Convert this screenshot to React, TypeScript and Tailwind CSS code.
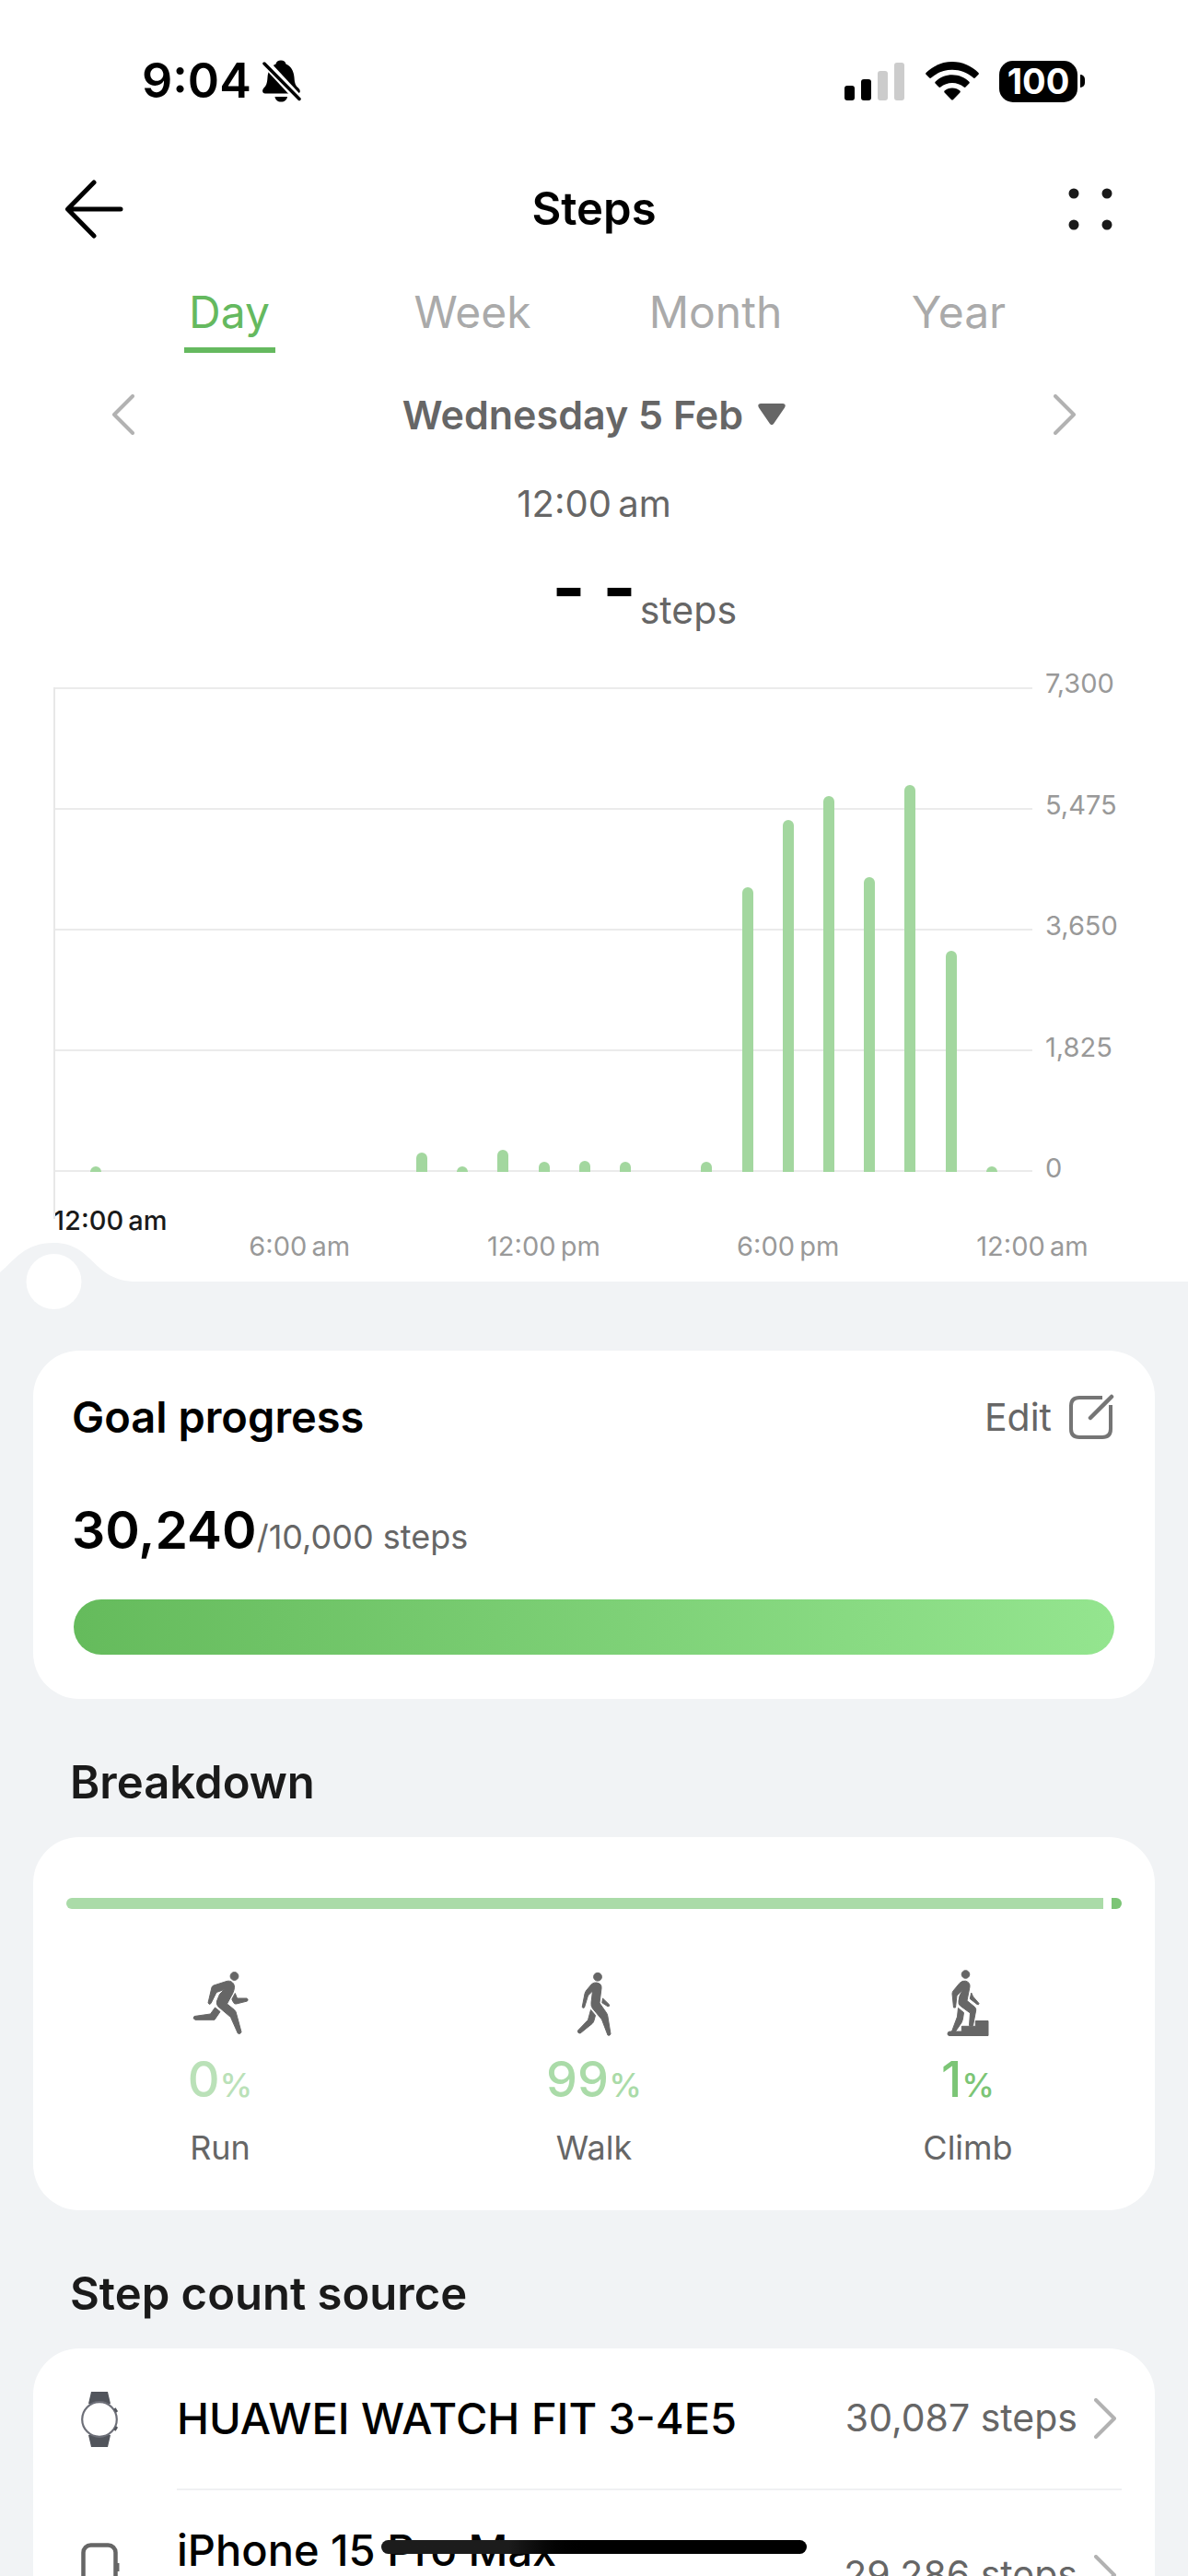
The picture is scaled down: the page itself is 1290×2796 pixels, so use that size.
import { useState } from "react";
import type { ReactNode } from "react";
import clsx from "clsx";

const TABS = ["Day", "Week", "Month", "Year"];
const MAX_STEPS = 7300;
const Y_TICKS = ["7,300", "5,475", "3,650", "1,825", "0"];
const X_TICKS = ["6:00\u2009am", "12:00\u2009pm", "6:00\u2009pm", "12:00\u2009am"];

const HOURLY = [
  { hour: 1, steps: 83 },
  { hour: 9, steps: 295 },
  { hour: 10, steps: 83 },
  { hour: 11, steps: 335 },
  { hour: 12, steps: 153 },
  { hour: 13, steps: 170 },
  { hour: 14, steps: 153 },
  { hour: 16, steps: 153 },
  { hour: 17, steps: 4290 },
  { hour: 18, steps: 5305 },
  { hour: 19, steps: 5665 },
  { hour: 20, steps: 4435 },
  { hour: 21, steps: 5825 },
  { hour: 22, steps: 3325 },
  { hour: 23, steps: 83 },
];

function BellOffIcon() {
  return (
    <svg width="42" height="46" viewBox="0 0 42 46" aria-hidden="true">
      <path
        d="M20 0.5C23 0.5 25 2 25.5 4.5C31 7 34 12 34.5 19C35 26 36 28 39 30.5C42 33.500 41 36.500 38 36.500H3C0 36.500-1 33.500 1.500 30.500C4 28 5 26 5.500 19C6 12 9 7 14.500 4.500C15 2 17 0.500 20 0.500Z"
        fill="#000"
      />
      <path d="M13.500 40H27C26.500 43.500 24 45.500 20.200 45.500S14 43.500 13.500 40Z" fill="#000" />
      <path d="M1 1L42 45" stroke="#fff" strokeWidth="9" />
      <path d="M2 4L40 42.500" stroke="#000" strokeWidth="3.500" strokeLinecap="round" />
    </svg>
  );
}

function SignalIcon() {
  return (
    <svg width="65" height="41" viewBox="0 0 65 41" aria-hidden="true">
      <rect x="0" y="25" width="11" height="16" rx="3" />
      <rect x="18" y="18" width="11" height="23" rx="3" />
      <rect x="36" y="9" width="11" height="32" rx="3" fill="#ccc" />
      <rect x="54" y="0" width="11" height="41" rx="3" fill="#ccc" />
    </svg>
  );
}

function WifiIcon() {
  return (
    <svg width="58" height="42" viewBox="0 0 58 42" aria-hidden="true">
      <path d="M29 0C40 0 50 4.500 57.500 12C58 12.500 58 13.300 57.500 13.800L53.800 17.600C53.300 18.100 52.500 18.100 52 17.600C45.500 11.700 37.500 8.800 29 8.800S12.500 11.700 6 17.600C5.500 18.100 4.700 18.100 4.200 17.600L0.500 13.800C0 13.300 0 12.500 0.500 12C8 4.500 18 0 29 0Z" />
      <path d="M29 14.300C36 14.300 42.500 17 47.400 21.800C47.900 22.300 47.900 23.100 47.400 23.600L43.500 27.500C43 28 42.200 28 41.700 27.500C38 24.500 33.700 23 29 23S20 24.500 16.300 27.500C15.800 28 15 28 14.500 27.500L10.600 23.600C10.100 23.100 10.100 22.300 10.600 21.800C15.500 17 22 14.300 29 14.300Z" />
      <path d="M29 28.500C32.200 28.500 35.100 29.700 37.400 31.600C37.900 32.100 37.900 32.900 37.400 33.400L29.900 41.200C29.400 41.700 28.600 41.700 28.100 41.200L20.600 33.400C20.100 32.900 20.100 32.100 20.600 31.600C22.900 29.700 25.800 28.500 29 28.500Z" />
    </svg>
  );
}

function BackIcon() {
  return (
    <svg width="64" height="64" viewBox="0 0 64 64" fill="none" stroke="#000" strokeWidth="5" strokeLinecap="round" strokeLinejoin="round" aria-hidden="true">
      <path d="M61 32H4M32 3L3.500 32L32 61" />
    </svg>
  );
}

function MoreIcon() {
  return (
    <svg width="48" height="46" viewBox="0 0 48 46" fill="#1a1a1a" aria-hidden="true">
      <circle cx="6" cy="6" r="5.500" />
      <circle cx="42" cy="6" r="5.500" />
      <circle cx="6" cy="40" r="5.500" />
      <circle cx="42" cy="40" r="5.500" />
    </svg>
  );
}

function Chevron({ flip = false }: { flip?: boolean }) {
  return (
    <svg width="24" height="44" viewBox="0 0 24 44" fill="none" stroke="#b2b2b2" strokeWidth="4" strokeLinecap="round" strokeLinejoin="round" aria-hidden="true">
      <path d={flip ? "M22 2L2 22L22 42" : "M2 2L22 22L2 42"} />
    </svg>
  );
}

function EditIcon() {
  return (
    <svg width="50" height="50" viewBox="0 0 50 50" fill="none" stroke="#757575" strokeWidth="4" strokeLinecap="round" aria-hidden="true">
      <path d="M37 4H12C6 4 3 7 3 13V38C3 44 6 47 12 47H37C43 47 46 44 46 38V12" strokeLinecap="butt" />
      <path d="M24 26L47 3" strokeWidth="4.500" />
    </svg>
  );
}

function RunIcon() {
  return (
    <svg width="72" height="72" viewBox="0 0 72 72" fill="#666" stroke="#666" strokeWidth="1" strokeLinejoin="round" aria-hidden="true">
      <circle cx="51.500" cy="7" r="4.400" />
      <path d="M23 36L27 19Q27.500 17.500 29 17L43 12.500C48 11 52 15 51.500 19.500Q51 23 49.500 26L43.500 37L51.500 43.500Q53.300 45 54 49L59 67.500Q58 70.500 55.300 69L47.500 51.500L34 40Q31.500 37.500 32.500 34L35.500 26.500L40.500 21.500L32 24.500L26 36.500Q24 38.500 23 36Z" />
      <path d="M52.300 25.500L54.500 31H65Q67 32.500 65.500 34L53.500 37Q51.500 37.500 50.500 35.500L48.800 32Z" />
      <path d="M30.500 41L36 45.500L30 54.300H9Q5.500 52.500 8 50.500L25.500 48Z" />
    </svg>
  );
}

function WalkIcon() {
  return (
    <svg width="72" height="72" viewBox="0 0 72 72" fill="#666" stroke="#666" strokeWidth="1" strokeLinejoin="round" aria-hidden="true">
      <circle cx="40" cy="7.700" r="4.400" />
      <path d="M23.200 40.500L26 26Q26.500 24 28 22L33.500 15.500Q36 13.500 39 14Q44.500 15 44 20L42 36L49 46Q50.500 48 50.800 50L54 69.500Q53.500 72 51 71L44.500 54L34.500 42Q32.500 39.500 33 35.500L34.500 23L29.500 28L25.500 41Q24 42 23.200 40.500Z" />
      <path d="M32.500 43.500L37.500 49.500L36 55Q35.500 57 34 58.500L21 69Q18 69 18.500 66L29.500 54.500Z" />
      <path d="M45.500 31L52.700 38Q53 40 51 39.800L44.800 35.800Z" />
    </svg>
  );
}

function ClimbIcon() {
  return (
    <svg width="72" height="72" viewBox="0 0 72 72" fill="#666" stroke="#666" strokeWidth="1" strokeLinejoin="round" aria-hidden="true">
      <circle cx="33.500" cy="5" r="4.300" />
      <path d="M20.500 41L19 26Q19 24.500 20 23L27 14.500Q30 11.500 33.500 12.200Q38.500 13.500 38 18.500L35 33.500L43.500 40.500Q45 42 44.700 44L41.500 60.500H37.500L38.500 47L27.500 39Q25.500 37.500 26 34Q26 28 30.500 22L24 28L22.500 41Z" />
      <path d="M25.500 41.500L31.500 46.500L30.500 53Q30 55.500 29 57.500L22.500 67H18.500L24.500 51Z" />
      <path d="M39.700 25L41.500 29L48 36.500Q48 38.500 46 37.500L38.300 31.500Z" />
      <path d="M44.300 55.500H58V71.500H16Q14 71.500 14 69.500Q14 67 16.500 67H29.300V61.300H44.300Z" />
    </svg>
  );
}

function WatchIcon() {
  return (
    <svg width="42" height="60" viewBox="0 0 42 60" aria-hidden="true">
      <path d="M11 0H29L32 13H8Z" fill="#52555c" />
      <path d="M11 60H29L32 47H8Z" fill="#52555c" />
      <circle cx="20" cy="30" r="18.800" fill="#fff" stroke="#6d6f78" strokeWidth="2.200" />
      <path d="M36.500 18L39 22M36.500 42L39 38" stroke="#52555c" strokeWidth="2.500" />
    </svg>
  );
}

function PhoneIcon() {
  return (
    <svg width="42" height="70" viewBox="0 0 42 70" fill="none" aria-hidden="true">
      <rect x="2.500" y="2.500" width="35" height="65" rx="8" stroke="#666" strokeWidth="4.500" />
      <path d="M40 22V31" stroke="#666" strokeWidth="3" />
    </svg>
  );
}

function StatusBar() {
  return (
    <div className="flex h-44 items-center justify-between pr-28 pl-[154px]">
      <div className="flex items-center gap-3">
        <span className="text-[52px] leading-[60px] font-semibold">9:04</span>
        <BellOffIcon />
      </div>
      <div className="flex items-center">
        <SignalIcon />
        <span className="ml-[23px]">
          <WifiIcon />
        </span>
        <div className="ml-[22px] flex h-[45px] w-[85px] items-center justify-center rounded-[15px] bg-black text-[38px] leading-none font-bold text-white">
          100
        </div>
        <div className="ml-[3px] h-3.5 w-[5px] rounded-r-full bg-black" />
      </div>
    </div>
  );
}

function StepChart() {
  return (
    <div className="mt-[54px] flex pl-[58px]">
      <div className="relative flex-1 pl-0.5">
        <div className="absolute top-0 left-0 h-[577px] w-0.5 bg-[#e8e8e8]" />
        <div className="relative h-[526px]">
          <div className="flex h-full flex-col justify-between">
            {Y_TICKS.map((tick) => (
              <div key={tick} className="h-0.5 bg-[#ebebeb]" />
            ))}
          </div>
          {HOURLY.map(({ hour, steps }) => (
            <div
              key={hour}
              className="absolute bottom-0 w-3 -translate-x-1/2 rounded-t-full bg-[#a3d79f]"
              style={{ left: `${(hour / 24) * 100}%`, height: `${(steps / MAX_STEPS) * 100}%` }}
            />
          ))}
        </div>
        <div className="pt-[35px] pb-5 text-[29px] leading-9">
          <div className="-ml-0.5 font-medium text-[#1a1a1a]">12:00&#8201;am</div>
          <div className="-mt-2 -mr-[12.5%] ml-[12.5%] grid grid-cols-4 text-center text-[#999]">
            {X_TICKS.map((tick) => (
              <span key={tick}>{tick}</span>
            ))}
          </div>
        </div>
      </div>
      <div className="-mt-[22px] flex h-[562px] w-[169px] flex-col justify-between pl-3.5 text-[29px] leading-9 text-[#999]">
        {Y_TICKS.map((tick) => (
          <span key={tick}>{tick}</span>
        ))}
      </div>
    </div>
  );
}

function TimeHandle() {
  return (
    <label className="absolute -top-[42px] left-0 block">
      <svg width="150" height="74" viewBox="0 0 150 74" aria-hidden="true">
        <path d="M0 32C16 19 26 0 58.500 0C102 0 100 42 148 42V44H0Z" fill="#f1f3f5" />
        <circle cx="58.500" cy="42" r="30" fill="#fff" />
      </svg>
      <input type="range" min={0} max={24} defaultValue={0} aria-label="Time of day" className="sr-only" />
    </label>
  );
}

function Card({ className, children }: { className?: string; children: ReactNode }) {
  return <div className={clsx("rounded-[50px] bg-white", className)}>{children}</div>;
}

function SectionTitle({ children }: { children: ReactNode }) {
  return (
    <h2 className="mt-[61px] mb-[29px] pl-10 text-[49px] leading-[60px] font-semibold text-[#1a1a1a]">{children}</h2>
  );
}

function Activity({ icon, value, label, color }: { icon: ReactNode; value: number; label: string; color: string }) {
  return (
    <div className="flex flex-col items-center">
      {icon}
      <div className={clsx("mt-[15px] flex items-baseline text-[54px] leading-[64px] font-medium", color)}>
        {value}
        <span className="text-[36px] leading-none">%</span>
      </div>
      <div className="mt-[18px] text-[36px] leading-[48px] text-[#666]">{label}</div>
    </div>
  );
}

export default function App() {
  const [tab, setTab] = useState("Day");

  return (
    <main className="relative h-screen overflow-hidden bg-[#f1f3f5] font-['Inter','Liberation_Sans',sans-serif] text-black">
      <div className="bg-white">
        <StatusBar />

        <header className="grid h-[102px] grid-cols-[1fr_auto_1fr] items-center px-[70px]">
          <button type="button" aria-label="Back" className="justify-self-start">
            <BackIcon />
          </button>
          <h1 className="text-[49px] leading-[60px] font-semibold">Steps</h1>
          <button type="button" aria-label="More" className="justify-self-end pr-3">
            <MoreIcon />
          </button>
        </header>

        <nav className="grid grid-cols-4 px-[117px] pt-[31px]">
          {TABS.map((name) => (
            <button
              key={name}
              type="button"
              onClick={() => setTab(name)}
              className={clsx(
                "flex flex-col items-center text-[48px] leading-[60px]",
                tab === name ? "text-[#65b95f]" : "text-[#aaa]"
              )}
            >
              {name}
              <span className={clsx("mt-2 h-1.5 w-[99px]", tab === name && "bg-[#65b95f]")} />
            </button>
          ))}
        </nav>

        <div className="flex h-[134px] items-center justify-between px-[122px]">
          <button type="button" aria-label="Previous day">
            <Chevron flip />
          </button>
          <button type="button" className="flex items-center gap-4 text-[43px] leading-[60px] font-semibold text-[#666]">
            Wednesday 5 Feb
            <svg width="30" height="24" viewBox="0 0 30 24" fill="#666" aria-hidden="true">
              <path d="M3 0H27C29.500 0 30.500 2 29 4.500L17 22C16 23.500 14 23.500 13 22L1 4.500C-0.500 2 0.500 0 3 0Z" />
            </svg>
          </button>
          <button type="button" aria-label="Next day">
            <Chevron />
          </button>
        </div>

        <div className="text-center text-[40px] leading-[60px] text-[#666]">12:00&#8201;am</div>

        <div className="grid grid-cols-[1fr_auto_1fr] pt-[55px]">
          <span className="col-start-2 -mt-6 text-[78px] leading-[60px] font-bold">- -</span>
          <span className="pl-1 text-[41px] leading-[60px] text-[#666]">steps</span>
        </div>

        <StepChart />
      </div>

      <div className="relative px-9 pt-[75px]">
        <TimeHandle />

        <Card className="px-11 pt-10 pb-12">
          <div className="flex h-16 items-center justify-between">
            <h2 className="-ml-0.5 text-[47px] leading-[60px] font-semibold">Goal progress</h2>
            <button type="button" className="flex items-center gap-[18px] text-[41px] leading-[60px] text-[#666]">
              Edit
              <EditIcon />
            </button>
          </div>
          <div className="mt-[55px] -ml-0.5 flex items-baseline text-[57px] leading-[72px] font-semibold">
            30,240
            <span className="text-[36px] leading-none font-normal text-[#666]">/10,000 steps</span>
          </div>
          <div className="mt-[39px] h-[60px] rounded-full bg-linear-to-r from-[#65bb5c] to-[#94e58f]" />
        </Card>

        <SectionTitle>Breakdown</SectionTitle>
        <Card className="pt-[66px] pb-11">
          <div className="mx-9 flex h-3 gap-[9px]">
            <div className="flex-1 rounded-l-full bg-[#aadba8]" />
            <div className="w-[11px] rounded-r-full bg-[#7cc576]" />
          </div>
          <div className="mt-[66px] grid grid-cols-3">
            <Activity icon={<RunIcon />} value={0} label="Run" color="text-[#bae1b8]" />
            <Activity icon={<WalkIcon />} value={99} label="Walk" color="text-[#aadba8]" />
            <Activity icon={<ClimbIcon />} value={1} label="Climb" color="text-[#7cc576]" />
          </div>
        </Card>

        <SectionTitle>Step count source</SectionTitle>
        <Card className="pr-9 pl-[52px]">
          <a href="#watch" className="flex items-center">
            <WatchIcon />
            <div className="ml-[62px] flex h-[154px] flex-1 items-center border-b-2 border-[#f0f1f3]">
              <span className="text-[47px] leading-[60px] font-medium">HUAWEI WATCH FIT 3-4E5</span>
              <span className="mr-[18px] ml-auto text-[41px] text-[#666]">30,087 steps</span>
              <Chevron />
              <span className="w-1.5" />
            </div>
          </a>
          <a href="#phone" className="flex h-[184px] items-center">
            <PhoneIcon />
            <div className="ml-[62px] flex flex-1 items-center">
              <span className="pb-[54px] text-[47px] leading-[60px] font-medium">iPhone 15 Pro Max</span>
              <span className="mr-[18px] ml-auto text-[41px] text-[#666]">29,286 steps</span>
              <Chevron />
              <span className="w-1.5" />
            </div>
          </a>
        </Card>
      </div>

      {/* home indicator */}
      <div className="absolute inset-x-0 bottom-6 mx-auto h-[15px] w-[462px] rounded-full bg-linear-to-r from-[#1c1c1c] from-30% to-black to-50%" />
    </main>
  );
}
